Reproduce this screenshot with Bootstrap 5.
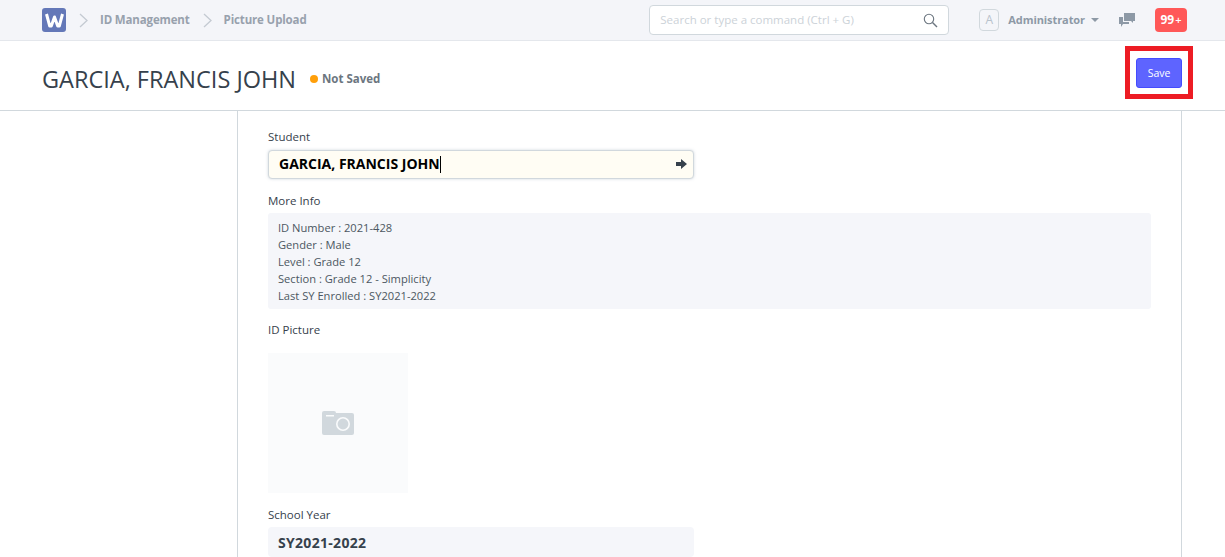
<!DOCTYPE html>
<html lang="en"><head><meta charset="utf-8"><title>Picture Upload</title>
<link href="https://cdn.jsdelivr.net/npm/bootstrap@5.3.0/dist/css/bootstrap.min.css" rel="stylesheet">
<style>
html,body{height:557px;overflow:hidden}
body{font-family:"Open Sans","Liberation Sans",sans-serif;background:#fff;color:#36414c;font-size:12px}
.topbar{height:41px;background:#f4f5f9;border-bottom:1px solid #e4e7ec;padding:0 38px 0 42px}
.logo-box{width:24px;height:24px;border-radius:3px;background:#6478b8}
.crumb-sep{margin:0 11px 0 13px}
.crumb{font-size:11.5px;font-weight:700;color:#98a1ad;letter-spacing:-.15px}
.cmd-box{width:300px;height:30px;background:#fff;border:1px solid #d1d8dd;border-radius:4px;padding:0 10px;margin-right:30px}
.cmd-text{font-size:11.5px;color:#ccd2d8}
.avatar-box{width:20px;height:22px;border:1px solid #d1d8dd;border-radius:4px;font-size:12px;color:#b8c2cc;margin-right:9px}
.admin-name{font-size:11px;font-weight:700;color:#8d99a6;letter-spacing:-.08px}
.admin-caret{width:0;height:0;border-left:4px solid transparent;border-right:4px solid transparent;border-top:4px solid #8d99a6;margin:0 20px 0 6px}
.note-badge{width:32px;height:24px;background:#ff5858;color:#fff;font-size:12px;font-weight:700;border-radius:4px;margin-left:20px}
.badge-plus{font-size:11px;font-weight:600;margin-left:1px}
.page-head{height:70px;background:#fff;border-bottom:1px solid #d1d8dd;padding:6px 42px 0;position:relative}
.page-title{font-size:23.5px;font-weight:400;color:#36414c;margin:0;padding-top:1px;letter-spacing:0}
.status-dot{width:8px;height:8px;border-radius:50%;background:#ff9f0a;margin:0 4px 0 14px}
.status-text{font-size:11.5px;font-weight:700;color:#6c7680}
.save-btn{--bs-btn-bg:#5e64ff;--bs-btn-border-color:#444bff;--bs-btn-color:#fff;--bs-btn-hover-bg:#5e64ff;--bs-btn-hover-color:#fff;font-size:10.5px;width:46px;height:30px;padding:1px 0 0;border-radius:3px}
.red-mark{position:absolute;left:1125px;top:5px;width:68px;height:53px;border:5px solid #ed1c24;padding-top:1px;display:flex;align-items:center;justify-content:center}
.form-panel{margin:0 43px 0 237px;height:446px;border-left:1px solid #d1d8dd;border-right:1px solid #d1d8dd;padding:18px 30px 0 30px;overflow:hidden}
.fld-label{font-size:11.5px;color:#36414c;line-height:16px;margin-bottom:4px}
.fld-label:first-child{margin-bottom:5px}
.link-input{width:426px;height:29px;background:#fffdf4;border:1px solid #d1d8dd;border-radius:4px;padding:0 6px 2px 10px;box-shadow:0 0 3px rgba(120,140,160,.35);font-size:14px;font-weight:700;color:#000;margin-bottom:14px}
.caret-bar{display:inline-block;width:1px;height:17px;background:#000;vertical-align:-4px}
.info-box{background:#f5f6fa;border-radius:3px;padding:6px 10px 4px;font-size:11.15px;line-height:17px;color:#4c5661;height:96px;margin-bottom:13px}
.pic-box{width:140px;height:140px;background:#fafbfc;margin:15px 0 14px}
.sy-box{width:426px;height:30px;background:#f5f6fa;border-radius:4px;padding:0 10px;font-size:14px;font-weight:700;letter-spacing:.3px;color:#36414c}
</style></head>
<body>
<nav class="topbar d-flex align-items-center">
  <div class="logo-box d-flex align-items-center justify-content-center">
    <svg width="19" height="15" viewBox="0 0 19 15"><path d="M1.500 1l3.200 12h1.600L9.500 4l3.200 9h1.600L17.500 1" fill="none" stroke="#fff" stroke-width="3" stroke-linejoin="round"/></svg>
  </div>
  <svg class="crumb-sep" width="10" height="15" viewBox="0 0 10 15"><path d="M1 1l7 6.5L1 14" fill="none" stroke="#c4cad2" stroke-width="1.3"/></svg>
  <span class="crumb">ID Management</span>
  <svg class="crumb-sep" width="10" height="15" viewBox="0 0 10 15"><path d="M1 1l7 6.5L1 14" fill="none" stroke="#c4cad2" stroke-width="1.3"/></svg>
  <span class="crumb">Picture Upload</span>
  <div class="cmd-box d-flex align-items-center justify-content-between ms-auto">
    <span class="cmd-text">Search or type a command (Ctrl + G)</span>
    <svg width="15" height="15" viewBox="0 0 15 15"><circle cx="6" cy="6" r="4.7" fill="none" stroke="#6c7680" stroke-width="1.1"/><path d="M9.5 9.5L14 14" stroke="#6c7680" stroke-width="1.4"/></svg>
  </div>
  <div class="avatar-box d-flex align-items-center justify-content-center">A</div>
  <span class="admin-name">Administrator</span>
  <span class="admin-caret"></span>
  <svg width="16" height="14" viewBox="0 0 16 14"><path d="M5 0h11v8h-2v2l-2-2H5z" fill="#8d99a6"/><path d="M0 4h4v5h6v2H4l-2 3v-3H0z" fill="#8d99a6"/></svg>
  <div class="note-badge d-flex align-items-center justify-content-center">99<span class="badge-plus">+</span></div>
</nav>
<header class="page-head d-flex align-items-center">
  <h1 class="page-title">GARCIA, FRANCIS JOHN</h1>
  <span class="status-dot"></span><span class="status-text">Not Saved</span>
  <div class="red-mark"><button class="btn save-btn" type="button">Save</button></div>
</header>
<main class="form-panel">
  <div class="fld-label">Student</div>
  <div class="link-input d-flex align-items-center justify-content-between">
    <span>GARCIA, FRANCIS JOHN<span class="caret-bar"></span></span>
    <svg width="11" height="10" viewBox="0 0 11 10"><path d="M0 3h5V0l6 5-6 5V7H0z" fill="#36414c"/></svg>
  </div>
  <div class="fld-label">More Info</div>
  <div class="info-box">ID Number : 2021-428<br>Gender : Male<br>Level : Grade 12<br>Section : Grade 12 - Simplicity<br>Last SY Enrolled : SY2021-2022</div>
  <div class="fld-label">ID Picture</div>
  <div class="pic-box d-flex align-items-center justify-content-center">
    <svg width="32" height="24" viewBox="0 0 32 24"><path d="M2 0h10a2 2 0 0 1 2 2h16a2 2 0 0 1 2 2v18a2 2 0 0 1-2 2H2a2 2 0 0 1-2-2V2a2 2 0 0 1 2-2z" fill="#d1d8dd"/><circle cx="21" cy="13" r="6.200" fill="none" stroke="#fafbfc" stroke-width="1.600"/><rect x="4" y="4" width="8" height="1.500" fill="#fafbfc"/></svg>
  </div>
  <div class="fld-label">School Year</div>
  <div class="sy-box d-flex align-items-center">SY2021-2022</div>
</main>
<script src="https://cdn.jsdelivr.net/npm/bootstrap@5.3.0/dist/js/bootstrap.bundle.min.js"></script>
</body></html>
